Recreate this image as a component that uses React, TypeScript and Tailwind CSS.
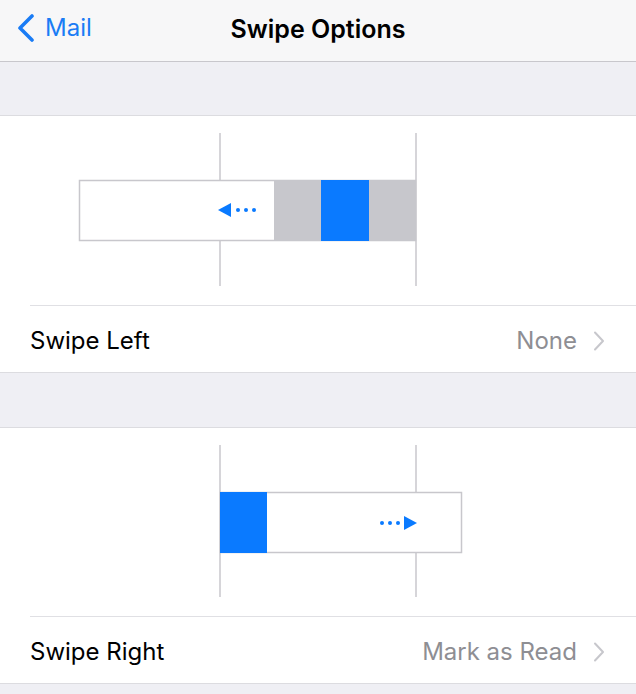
const BLUE = "#0a7aff";
const LINE = "#c8c7cc";

function LeftDiagram() {
  return (
    <svg width="636" height="189" viewBox="0 0 636 189" aria-hidden>
      <line x1="220" y1="17" x2="220" y2="170" stroke={LINE} strokeWidth="1.5" />
      <line x1="416" y1="17" x2="416" y2="170" stroke={LINE} strokeWidth="1.5" />
      <rect x="79.5" y="64.5" width="336" height="60" fill="#fff" stroke={LINE} strokeWidth="1.5" />
      <rect x="274" y="64" width="142" height="61" fill="#c7c7cc" />
      <rect x="321" y="64" width="48" height="61" fill={BLUE} />
      <polygon points="218,94 231,87 231,101" fill={BLUE} />
      <circle cx="238" cy="94" r="2" fill={BLUE} />
      <circle cx="246" cy="94" r="2" fill={BLUE} />
      <circle cx="254" cy="94" r="2" fill={BLUE} />
    </svg>
  );
}

function RightDiagram() {
  return (
    <svg width="636" height="188" viewBox="0 0 636 188" aria-hidden>
      <line x1="220" y1="17" x2="220" y2="169" stroke={LINE} strokeWidth="1.5" />
      <line x1="416" y1="17" x2="416" y2="169" stroke={LINE} strokeWidth="1.5" />
      <rect x="220.5" y="64.5" width="241" height="60" fill="#fff" stroke={LINE} strokeWidth="1.5" />
      <rect x="220" y="64" width="47" height="61" fill={BLUE} />
      <circle cx="382" cy="95" r="2" fill={BLUE} />
      <circle cx="390" cy="95" r="2" fill={BLUE} />
      <circle cx="398" cy="95" r="2" fill={BLUE} />
      <polygon points="417,95 404,88 404,102" fill={BLUE} />
    </svg>
  );
}

// iOS disclosure chevron, thin and tall
function Disclosure() {
  return (
    <svg width="12" height="20" viewBox="0 0 12 20" className="ml-[16px]" aria-hidden>
      <polyline points="2,1.5 10,10 2,18.5" fill="none" stroke="#c7c7cc" strokeWidth="2" strokeLinecap="round" strokeLinejoin="round" />
    </svg>
  );
}

function BackChevron() {
  return (
    <svg width="22" height="28" viewBox="0 0 22 28" aria-hidden>
      <polyline points="16,2 4,14 16,26" fill="none" stroke="#1a7cf5" strokeWidth="3.6" strokeLinecap="round" strokeLinejoin="round" />
    </svg>
  );
}

function OptionRow({ label, value }: { label: string; value: string }) {
  return (
    <div className="ml-[30px] flex h-[67px] items-center border-t border-[#e0e0e4] pr-[31px] pt-[3px]">
      <span className="flex-1 text-[24px] text-black">{label}</span>
      <span className="text-[24px] text-[#8e8e93]">{value}</span>
      <Disclosure />
    </div>
  );
}

export default function App() {
  return (
    <div
      className="h-[694px] w-[636px] overflow-hidden bg-[#efeff4]"
      style={{ fontFamily: "Inter, 'Noto Sans', sans-serif" }}
    >
      {/* nav bar */}
      <div className="relative flex h-[62px] items-center border-b border-[#c8c7cc] bg-[#f7f7f8] pb-[6px]">
        <div className="flex items-center gap-[7px] pl-[16px] text-[24px] text-[#1a7cf5]">
          <BackChevron />
          <span>Mail</span>
        </div>
        <div className="absolute inset-x-0 top-[11px] text-center text-[25px] font-semibold text-black">
          Swipe Options
        </div>
      </div>

      <div className="h-[53px]" />

      <section className="border-y border-[#dcdce0] bg-white">
        <LeftDiagram />
        <OptionRow label="Swipe Left" value="None" />
      </section>

      <div className="h-[54px]" />

      <section className="border-y border-[#dcdce0] bg-white">
        <RightDiagram />
        <OptionRow label="Swipe Right" value="Mark as Read" />
      </section>
    </div>
  );
}
